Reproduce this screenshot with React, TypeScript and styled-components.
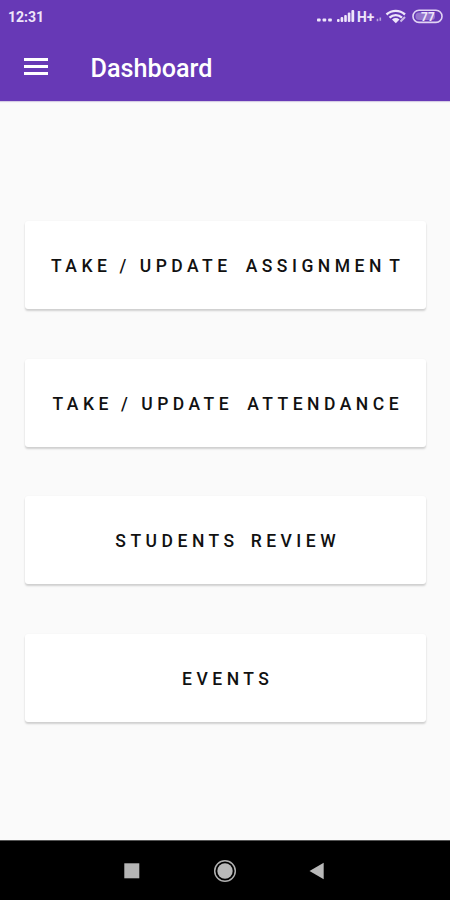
import React from "react";
import styled, { createGlobalStyle } from "styled-components";

const GlobalStyle = createGlobalStyle`
  * { box-sizing: border-box; }
  body { margin: 0; background: #fafafa; font-family: Roboto, "Liberation Sans", sans-serif; }
`;

const Screen = styled.div`
  width: 450px;
  height: 900px;
  display: flex;
  flex-direction: column;
  background: #fafafa;
  overflow: hidden;
`;

const Header = styled.header`
  height: 101px;
  flex: none;
  background: #6739b6;
  color: #fff;
  box-shadow: 0 1px 1px #d5cce4;
`;

const StatusBar = styled.div`
  height: 34px;
  padding: 0 7px 0 8px;
  display: flex;
  align-items: center;
  justify-content: space-between;
  color: #eee6fa;
`;

const Clock = styled.span`
  font-size: 14px;
  line-height: 34px;
  font-weight: 700;
`;

const StatusIcons = styled.svg`
  width: 128px;
  height: 34px;
  display: block;
`;

const Toolbar = styled.div`
  height: 67px;
  padding-left: 24px;
  display: flex;
  align-items: center;
  gap: 42.5px;
`;

const MenuButton = styled.button`
  width: 24px;
  height: 17px;
  margin-bottom: 2px;
  padding: 0;
  border: 0;
  background: none;
  display: flex;
  flex-direction: column;
  justify-content: space-between;
`;

const MenuLine = styled.span`
  width: 24px;
  height: 3px;
  background: #fff;
`;

const Title = styled.h1`
  margin: 2px 0 0;
  font-size: 25.2px;
  line-height: 30px;
  font-weight: 500;
`;

const CardList = styled.main`
  flex: 1;
  padding: 120px 24px 0 25px;
  display: flex;
  flex-direction: column;
  gap: 49.5px;
`;

const Card = styled.button`
  height: 88px;
  flex: none;
  padding: 2px 0 0 4.5px;
  border: 0;
  border-radius: 3px;
  background: #fff;
  color: #111;
  box-shadow: 0 2px 2px rgba(0, 0, 0, 0.17), 0 0 2px rgba(0, 0, 0, 0.04);
  display: flex;
  align-items: center;
  justify-content: center;
  font: 500 17.5px/24px Roboto, sans-serif;
`;

const Word = styled.span<{ $gap: number }>`
  margin-left: ${(p) => p.$gap}px;
  letter-spacing: 4.5px;
`;

const NavBar = styled.nav`
  height: 60px;
  flex: none;
  background: #000;
  border-top: 1px solid #555;
  padding: 0 123px;
  display: flex;
  align-items: center;
  justify-content: space-between;
`;

const NavIcon = styled.svg`
  width: 24px;
  height: 24px;
  display: block;
`;

type WordSpec = { text: string; gap?: number };

const cards: WordSpec[][] = [
  [
    { text: "TAKE" },
    { text: "/", gap: 8 },
    { text: "UPDATE", gap: 9 },
    { text: "ASSIGNMEN", gap: 14 },
    { text: "T", gap: 3.5 },
  ],
  [
    { text: "TAKE" },
    { text: "/", gap: 8 },
    { text: "UPDATE", gap: 9 },
    { text: "ATTENDANCE", gap: 14 },
  ],
  [{ text: "STUDENTS" }, { text: "REVIEW", gap: 12 }],
  [{ text: "EVENTS" }],
];

function StatusGlyphs() {
  return (
    <StatusIcons viewBox="315 0 128 34" fill="#eee6fa">
      <rect x="317" y="18.5" width="3.6" height="3" rx="0.8" />
      <rect x="322.6" y="18.5" width="3.6" height="3" rx="0.8" />
      <rect x="328.2" y="18.5" width="3.6" height="3" rx="0.8" />
      <rect x="337" y="19" width="2.6" height="3" rx="1" />
      <rect x="340.6" y="17" width="2.6" height="5" rx="1" />
      <rect x="344.2" y="15" width="2.6" height="7" rx="1" />
      <rect x="347.8" y="12.5" width="2.6" height="9.5" rx="1" />
      <rect x="351.4" y="10" width="2.8" height="12" rx="1" />
      <text x="357" y="21.5" fontFamily="Roboto" fontSize="13.8" fontWeight="700">H+</text>
      <path d="M377.5 21.3v-2.5M380.3 20.8v-3.3" fill="none" stroke="#b8a2dd" strokeWidth="1.6" />
      <g fill="none" stroke="#eee6fa" strokeWidth="2.4">
        <path d="M386.5 14.5c5.5-4.8 13-4.8 18.5 0" />
        <path d="M389.5 17.7c3.8-3.3 8.7-3.3 12.5 0" />
      </g>
      <path d="M392 19.4c2.3-1.8 5.2-1.8 7.5 0l-3.7 3.8z" />
      <path d="M400.5 21.5l4.5-4.5" stroke="#cbbbe6" strokeWidth="2" />
      <rect x="413" y="10.2" width="29" height="12.2" rx="6" fill="none" stroke="#e1d4f4" strokeWidth="1.6" />
      <rect x="415.5" y="12.5" width="19.5" height="7.6" rx="3.5" fill="#c3afe4" opacity="0.5" />
      <text x="421" y="20.6" fontFamily="Roboto" fontSize="12" fontWeight="700">77</text>
    </StatusIcons>
  );
}

export default function App() {
  return (
    <>
      <GlobalStyle />
      <Screen>
        <Header>
          <StatusBar>
            <Clock>12:31</Clock>
            <StatusGlyphs />
          </StatusBar>
          <Toolbar>
            <MenuButton aria-label="Menu">
              <MenuLine />
              <MenuLine />
              <MenuLine />
            </MenuButton>
            <Title>Dashboard</Title>
          </Toolbar>
        </Header>
        <CardList>
          {cards.map((words, i) => (
            <Card key={i}>
              {words.map((w, j) => (
                <Word key={j} $gap={w.gap ?? 0}>
                  {w.text}
                </Word>
              ))}
            </Card>
          ))}
        </CardList>
        <NavBar>
          <NavIcon viewBox="0 0 24 24">
            <rect x="1.3" y="4.3" width="15" height="15" fill="#b5b5b5" />
          </NavIcon>
          <NavIcon viewBox="0 0 24 24">
            <circle cx="12" cy="12" r="10.3" fill="none" stroke="#b0b0b0" strokeWidth="1.5" />
            <circle cx="12" cy="12" r="7.7" fill="#b9b9b9" />
          </NavIcon>
          <NavIcon viewBox="0 0 24 24">
            <path d="M6.5 12 20.7 3.7v16.6z" fill="#b9b9b9" />
          </NavIcon>
        </NavBar>
      </Screen>
    </>
  );
}
